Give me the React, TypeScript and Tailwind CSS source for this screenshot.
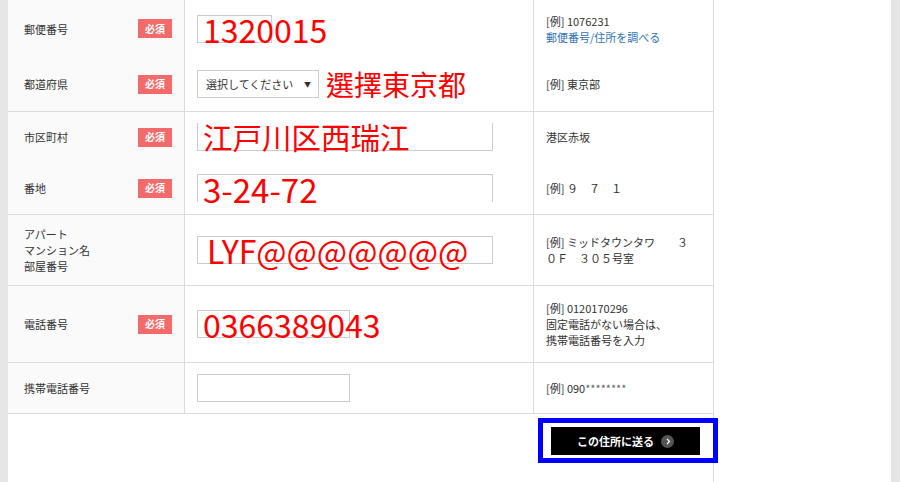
const jp = "font-['Noto_Sans_CJK_JP',sans-serif]";

function Badge() {
  return (
    <span className="flex h-[19px] w-[34px] items-center justify-center bg-[#f36a6a] text-[10px] font-bold leading-none text-white">
      必須
    </span>
  );
}

type RowProps = {
  h: number;
  label: React.ReactNode;
  required?: boolean;
  input?: React.ReactNode;
  note?: React.ReactNode;
  last?: boolean;
};

function Row({ h, label, required, input, note, last }: RowProps) {
  return (
    <div
      className={`grid grid-cols-[177px_349px_180px] ${last ? "border-b border-[#dcdcdc]" : ""}`}
      style={{ height: h + (last ? 1 : 0) }}
    >
      <div className="flex items-center justify-between border-r border-[#dcdcdc] bg-[#fafafa] pl-4 pr-3 text-[11px] leading-4 text-[#333]">
        <div>{label}</div>
        {required && <Badge />}
      </div>
      <div className="flex items-center border-r border-[#dcdcdc] pl-3">{input}</div>
      <div className="flex items-center border-r border-[#dcdcdc] pl-3 text-[11px] leading-[16px] text-[#333]">
        <div>{note}</div>
      </div>
    </div>
  );
}

function Field({
  w,
  value,
  size = "text-[32px]",
  cls = "",
}: {
  w: number;
  value?: string;
  size?: string;
  cls?: string;
}) {
  return (
    <div className={`relative h-[28px] border border-[#cccccc] bg-white ${cls}`} style={{ width: w }}>
      {value && (
        <span className={`absolute left-[5px] top-1/2 -translate-y-1/2 whitespace-nowrap leading-none text-[#ff0000] ${size}`}>
          {value}
        </span>
      )}
    </div>
  );
}

export default function App() {
  return (
    <div className={`flex h-[482px] w-[900px] overflow-hidden bg-white ${jp}`}>
      <div className="w-[8px] bg-[#e6e6e6]" />
      <div className="flex flex-1 flex-col">
        <div className="flex w-[706px] flex-1 flex-col border-r border-[#dcdcdc]">
          <Row
            h={57}
            label="郵便番号"
            required
            input={<Field w={75} value="1320015" />}
            note={
              <>
                <div>[例] 1076231</div>
                <div className="text-[#2f72b8]">郵便番号/住所を調べる</div>
              </>
            }
          />
          <Row
            h={54}
            last
            label="都道府県"
            required
            input={
              <div className="flex items-center gap-[7px]">
                <div className="flex h-[28px] w-[122px] items-center justify-between border border-[#cccccc] pl-2 pr-[7px] text-[11px] text-[#333]">
                  <span>選択してください</span>
                  <span className="text-[7px]">▼</span>
                </div>
                <span className="font-['Noto_Sans_CJK_TC',sans-serif] text-[28px] leading-none text-[#ff0000]">選擇東京都</span>
              </div>
            }
            note="[例] 東京部"
          />
          <Row
            h={50}
            label="市区町村"
            required
            input={<Field w={296} value="江戸川区西瑞江" size="text-[29.5px]" cls="border-t-0" />}
            note="港区赤坂"
          />
          <Row
            h={52}
            last
            label="番地"
            required
            input={<Field w={296} value="3-24-72" size="text-[33px]" cls="border-b-0" />}
            note="[例] ９　７　１"
          />
          <Row
            h={70}
            last
            label={
              <>
                <div>アパート</div>
                <div>マンション名</div>
                <div>部屋番号</div>
              </>
            }
            input={<Field w={296} value="LYF@@@@@@@" size="text-[32px] pl-[4px]" />}
            note={
              <>
                <div>[例] ミッドタウンタワ　　３</div>
                <div>０Ｆ　３０５号室</div>
              </>
            }
          />
          <Row
            h={76}
            last
            label="電話番号"
            required
            input={<Field w={153} value="0366389043" />}
            note={
              <>
                <div>[例] 0120170296</div>
                <div>固定電話がない場合は、</div>
                <div>携帯電話番号を入力</div>
              </>
            }
          />
          <Row
            h={50}
            last
            label="携帯電話番号"
            input={<Field w={153} />}
            note={
              <div>
                [例] 090<span className="text-[#666]">********</span>
              </div>
            }
          />
          <div className="flex justify-end pr-[13px] pt-[13px]">
            <div className="relative">
              <button className="flex h-[28px] w-[149px] items-center justify-center gap-[7px] bg-black text-[11px] font-bold text-white">
                <span>この住所に送る</span>
                <span className="flex h-[13px] w-[13px] items-center justify-center rounded-full bg-[#555]">
                  <svg width="6" height="7" viewBox="0 0 6 7" fill="none">
                    <path d="M2 1l2.5 2.5L2 6" stroke="white" strokeWidth="1.2" />
                  </svg>
                </span>
              </button>
              <div className="pointer-events-none absolute -bottom-[8px] -left-[13px] -right-[18px] -top-[9px] border-[5px] border-[#0000ff]" />
            </div>
          </div>
        </div>
      </div>
      <div className="w-[9px] bg-[#e6e6e6]" />
    </div>
  );
}
